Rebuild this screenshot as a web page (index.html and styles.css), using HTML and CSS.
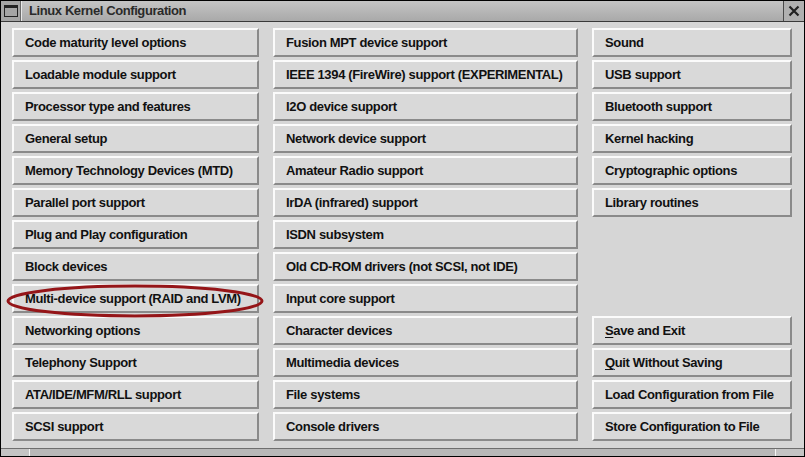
FILE: index.html
```html
<!DOCTYPE html>
<html>
<head>
  <meta charset="UTF-8">
  <title>Linux Kernel Configuration</title>
  <link rel="stylesheet" href="styles.css">
</head>
<body>
  <div class="window">
    <div class="titlebar">
      <div class="menu-box">
        <svg width="14" height="12" viewBox="0 0 14 12"><rect x="0.5" y="0.5" width="13" height="11" fill="none" stroke="#222"/><rect x="1" y="1" width="12" height="2" fill="#222"/></svg>
      </div>
      <div class="title">Linux Kernel Configuration</div>
      <div class="close-box">
        <svg width="12" height="12" viewBox="0 0 12 12"><path d="M1.5 1.5 L10.5 10.5 M10.5 1.5 L1.5 10.5" stroke="#222" stroke-width="2.2"/></svg>
      </div>
    </div>

    <div class="content">
      <div class="grid">
        <button class="btn">Code maturity level options</button>
        <button class="btn">Fusion MPT device support</button>
        <button class="btn">Sound</button>

        <button class="btn">Loadable module support</button>
        <button class="btn">IEEE 1394 (FireWire) support (EXPERIMENTAL)</button>
        <button class="btn">USB support</button>

        <button class="btn">Processor type and features</button>
        <button class="btn">I2O device support</button>
        <button class="btn">Bluetooth support</button>

        <button class="btn">General setup</button>
        <button class="btn">Network device support</button>
        <button class="btn">Kernel hacking</button>

        <button class="btn">Memory Technology Devices (MTD)</button>
        <button class="btn">Amateur Radio support</button>
        <button class="btn">Cryptographic options</button>

        <button class="btn">Parallel port support</button>
        <button class="btn">IrDA (infrared) support</button>
        <button class="btn">Library routines</button>

        <button class="btn">Plug and Play configuration</button>
        <button class="btn">ISDN subsystem</button>
        <div></div>

        <button class="btn">Block devices</button>
        <button class="btn">Old CD-ROM drivers (not SCSI, not IDE)</button>
        <div></div>

        <button class="btn">Multi-device support (RAID and LVM)</button>
        <button class="btn">Input core support</button>
        <div></div>

        <button class="btn">Networking options</button>
        <button class="btn">Character devices</button>
        <button class="btn"><u>S</u>ave and Exit</button>

        <button class="btn">Telephony Support</button>
        <button class="btn">Multimedia devices</button>
        <button class="btn"><u>Q</u>uit Without Saving</button>

        <button class="btn">ATA/IDE/MFM/RLL support</button>
        <button class="btn">File systems</button>
        <button class="btn">Load Configuration from File</button>

        <button class="btn">SCSI support</button>
        <button class="btn">Console drivers</button>
        <button class="btn">Store Configuration to File</button>
      </div>

      <!-- annotation ring drawn over the screenshot -->
      <svg class="mark" width="262" height="36" viewBox="0 0 262 36">
        <ellipse cx="129" cy="17" rx="127" ry="15" fill="none" stroke="#951518" stroke-width="3"/>
      </svg>
    </div>

    <div class="statusbar">
      <div class="grip"></div>
      <div class="bar"></div>
      <div class="grip"></div>
    </div>
  </div>
</body>
</html>
```

FILE: styles.css
```css
body {
  margin: 0;
  padding: 0;
  background: #d6d6d6;
  font-family: "Liberation Sans", Arial, sans-serif;
}
.window {
  width: 803px;
  height: 455px;
  border: 1px solid #000;
  background: #d6d6d6;
  display: flex;
  flex-direction: column;
}
/* Title bar */
.titlebar {
  height: 20px;
  display: flex;
  border-bottom: 1px solid #3a3a3a;
  background: linear-gradient(#c4c4c4, #a9a9a9);
}
.menu-box,
.close-box {
  width: 20px;
  display: flex;
  align-items: center;
  justify-content: center;
  background: #a4a4a4;
}
.menu-box {
  border-right: 1px solid #e8e8e8;
  box-shadow: inset -1px 0 0 #6a6a6a;
}
.close-box {
  border-left: 1px solid #4a4a4a;
  background: #b0b0b0;
}
.title {
  flex: 1;
  padding-left: 7px;
  font-size: 13px;
  font-weight: bold;
  line-height: 20px;
  color: #2a2a2a;
  letter-spacing: -0.4px;
}
/* Button area */
.content {
  flex: 1;
  position: relative;
  padding: 6px 11px 0 11px;
}
.grid {
  display: grid;
  grid-template-columns: 247px 305px 200px;
  grid-auto-rows: 29px;
  column-gap: 14px;
  row-gap: 3px;
}
.btn {
  margin: 0;
  padding: 0 0 0 11px;
  text-align: left;
  font-family: "Liberation Sans", Arial, sans-serif;
  font-size: 13px;
  font-weight: bold;
  letter-spacing: -0.35px;
  color: #111;
  background: #d9d9d9;
  border: 2px solid;
  border-color: #fbfbfb #8a8a8a #8a8a8a #fbfbfb;
  white-space: nowrap;
}
.btn u {
  text-decoration-thickness: 1px;
  text-underline-offset: 2px;
}
.mark {
  position: absolute;
  left: 5px;
  top: 262px;
}
/* Bottom frame */
.statusbar {
  height: 7px;
  display: flex;
  border-top: 1px solid #6e6e6e;
  background: #bdbdbd;
}
.grip {
  width: 28px;
  background: #c4c4c4;
}
.bar {
  flex: 1;
  border-left: 1px solid #f4f4f4;
  border-right: 1px solid #f4f4f4;
  background: #b8b8b8;
}
```
